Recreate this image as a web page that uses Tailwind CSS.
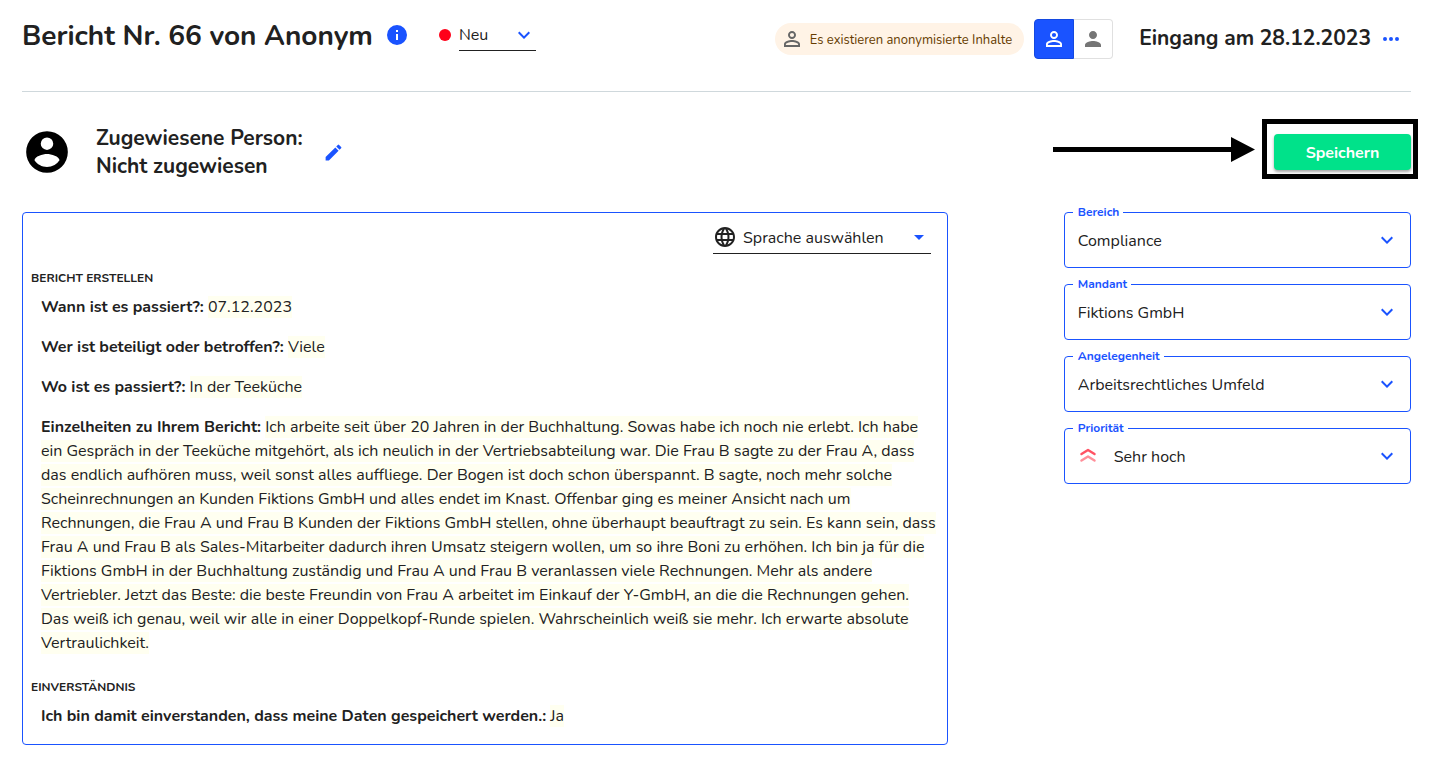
<!DOCTYPE html>
<html lang="de">
<head>
<meta charset="utf-8">
<meta name="viewport" content="width=device-width, initial-scale=1">
<title>Bericht Nr. 66</title>
<script src="https://cdn.jsdelivr.net/npm/@tailwindcss/browser@4"></script>
</head>
<body class="bg-white font-[Nunito,Lato,sans-serif] text-base text-[#212121]">
<svg class="hidden" aria-hidden="true">
  <symbol id="chevron" viewBox="0 0 24 24"><path fill="currentColor" d="M7.41 8.59 12 13.17l4.59-4.58L18 10l-6 6-6-6z"/></symbol>
  <symbol id="person-outline" viewBox="0 0 24 24"><path fill="currentColor" d="M12 5.9a2.1 2.1 0 1 1 0 4.2 2.1 2.1 0 0 1 0-4.2m0 9c2.97 0 6.1 1.46 6.1 2.1v1.1H5.900V17c0-.64 3.130-2.100 6.100-2.100M12 4C9.790 4 8 5.790 8 8s1.790 4 4 4 4-1.790 4-4-1.790-4-4-4m0 9c-2.670 0-8 1.340-8 4v3h16v-3c0-2.660-5.330-4-8-4"/></symbol>
  <symbol id="person" viewBox="0 0 24 24"><path fill="currentColor" d="M12 12c2.210 0 4-1.790 4-4s-1.790-4-4-4-4 1.790-4 4 1.790 4 4 4m0 2c-2.670 0-8 1.340-8 4v2h16v-2c0-2.660-5.330-4-8-4"/></symbol>
</svg>
<div class="pr-[19px] pl-[22px]">
  <header class="flex items-start justify-between border-b border-[#cfd8dc] pt-[15px] pb-8">
    <div class="flex h-10 items-center">
      <h1 class="pt-0.5 text-[28px] leading-10 font-bold whitespace-nowrap">Bericht Nr. 66 von Anonym</h1>
      <button type="button" aria-label="Information" class="ml-3 text-[#1a53ff]">
        <svg class="size-6" viewBox="0 0 24 24"><path fill="currentColor" d="M12 2a10 10 0 1 0 0 20 10 10 0 0 0 0-20m1 15h-2v-6h2zm0-8h-2V7h2z"/></svg>
      </button>
      <span class="ml-[30px] size-3 rounded-full bg-[#ff0019]"></span>
      <div class="relative ml-2 w-[77px]">
        <select aria-label="Status" class="h-8 w-full appearance-none border-b border-[#212121] bg-transparent pr-6 outline-none"><option>Neu</option></select>
        <svg class="pointer-events-none absolute top-1 right-0 size-6 text-[#1a53ff]"><use href="#chevron"/></svg>
      </div>
    </div>
    <div class="mt-1 flex h-10 items-center">
      <div class="flex h-8 items-center gap-1.5 rounded-full bg-[#fff3e6] pr-3 pl-[5px] text-[13px] whitespace-nowrap text-[#663c00]">
        <svg class="size-6 text-[#666]"><use href="#person-outline"/></svg><span class="pt-[3px]">Es existieren anonymisierte Inhalte</span>
      </div>
      <div class="ml-2.5 flex">
        <button type="button" aria-label="Anonymisiert" aria-pressed="true" class="flex h-10 w-10 items-center justify-center rounded-l border border-[#1449e0] bg-[#1a53ff] text-white"><svg class="size-6"><use href="#person-outline"/></svg></button>
        <button type="button" aria-label="Original" aria-pressed="false" class="flex h-10 w-[39px] items-center justify-center rounded-r border border-l-0 border-[#e0e0e0] text-[#757575]"><svg class="size-6"><use href="#person"/></svg></button>
      </div>
      <h2 class="ml-[26px] text-[21px] font-bold whitespace-nowrap">Eingang am 28.12.2023</h2>
      <button type="button" aria-label="Mehr" class="mr-2 ml-2 text-[#1a53ff]">
        <svg class="size-6" viewBox="0 0 24 24"><path fill="currentColor" d="M6 10a2 2 0 1 0 0 4 2 2 0 0 0 0-4m12 0a2 2 0 1 0 0 4 2 2 0 0 0 0-4m-6 0a2 2 0 1 0 0 4 2 2 0 0 0 0-4"/></svg>
      </button>
    </div>
  </header>

  <div class="mt-[27px] flex items-start justify-between">
    <div class="mt-[5px] flex h-14 items-center">
      <svg class="size-[50px] text-black" viewBox="0 0 24 24"><path fill="currentColor" d="M12 2a10 10 0 1 0 0 20 10 10 0 0 0 0-20m0 3a3 3 0 1 1 0 6 3 3 0 0 1 0-6m0 14.200c-2.500 0-4.710-1.280-6-3.220.03-1.990 4-3.080 6-3.080s5.970 1.090 6 3.080a7.200 7.200 0 0 1-6 3.220"/></svg>
      <h2 class="ml-6 text-[21px] leading-7 font-bold whitespace-nowrap">Zugewiesene Person:<br>Nicht zugewiesen</h2>
      <button type="button" aria-label="Bearbeiten" class="ml-5 text-[#1a53ff]">
        <svg class="size-[21px]" viewBox="0 0 24 24"><path fill="currentColor" d="M3 17.250V21h3.750L17.810 9.940l-3.750-3.750zM20.710 7.040a1 1 0 0 0 0-1.410l-2.340-2.340a1 1 0 0 0-1.410 0l-1.830 1.830 3.750 3.750z"/></svg>
      </button>
    </div>
    <div class="-mr-[7px] flex items-center gap-[7px]">
      <svg class="h-[25px] w-[202px] text-black" viewBox="0 0 202 25"><path fill="currentColor" d="M0 10h178V0l24 12.500L178 25V15H0z"/></svg>
      <div class="border-[5px] border-black pt-2.5 pr-0.5 pb-1 pl-[7px]">
        <button type="button" class="block h-9 w-[137px] rounded bg-[#00e28a] pt-0.5 font-bold text-white shadow-[0_2px_3px_rgba(0,0,0,0.350)]">Speichern</button>
      </div>
    </div>
  </div>

  <main class="mt-6 grid grid-cols-12 items-start">
    <section class="col-span-8 mt-2 rounded border border-[#1a53ff] px-2 pb-4">
      <div class="mt-2 mr-2 ml-auto flex h-[33px] w-[218px] items-center border-b border-[#212121]">
        <svg class="size-6 shrink-0" viewBox="0 0 24 24"><path fill="currentColor" d="M11.990 2C6.470 2 2 6.480 2 12s4.470 10 9.990 10C17.520 22 22 17.520 22 12S17.520 2 11.990 2m6.930 6h-2.950a15.700 15.700 0 0 0-1.380-3.560A8.030 8.030 0 0 1 18.920 8M12 4.040c.83 1.200 1.480 2.530 1.910 3.960h-3.820c.43-1.430 1.080-2.760 1.910-3.960M4.260 14a8.200 8.200 0 0 1 0-4h3.380a16.500 16.500 0 0 0 0 4zm.82 2h2.950c.32 1.250.78 2.450 1.380 3.560A8 8 0 0 1 5.080 16m2.950-8H5.080a8 8 0 0 1 4.330-3.560A15.700 15.700 0 0 0 8.030 8M12 19.960A14 14 0 0 1 10.090 16h3.820A14 14 0 0 1 12 19.960M14.340 14H9.660a14.700 14.700 0 0 1 0-4h4.680a14.600 14.600 0 0 1 0 4m.25 5.560c.6-1.110 1.060-2.310 1.380-3.560h2.950a8.030 8.030 0 0 1-4.330 3.560M16.360 14a16.500 16.500 0 0 0 0-4h3.380a8.200 8.200 0 0 1 0 4z"/></svg>
        <div class="relative ml-1.5 flex-1">
          <select aria-label="Sprache" class="h-8 w-full appearance-none bg-transparent pt-0.5 pr-6 outline-none"><option>Sprache auswählen</option></select>
          <svg class="pointer-events-none absolute top-1 right-0 size-6 text-[#1a53ff]" viewBox="0 0 24 24"><path fill="currentColor" d="m7 10 5 5 5-5z"/></svg>
        </div>
      </div>
      <h3 class="mt-4 text-xs leading-4 font-bold uppercase">Bericht erstellen</h3>
      <div class="mt-[9px] space-y-4 pl-2.5 leading-6">
        <p><strong>Wann ist es passiert?:</strong> <span class="bg-[#fffff0]">07.12.2023</span></p>
        <p><strong>Wer ist beteiligt oder betroffen?:</strong> <span class="bg-[#fffff0]">Viele</span></p>
        <p><strong>Wo ist es passiert?:</strong> <span class="bg-[#fffff0]">In der Teeküche</span></p>
        <p><strong>Einzelheiten zu Ihrem Bericht:</strong> <span class="bg-[#fffff0]">Ich arbeite seit über 20 Jahren in der Buchhaltung. Sowas habe ich noch nie erlebt. Ich habe ein Gespräch in der Teeküche mitgehört, als ich neulich in der Vertriebsabteilung war. Die Frau B sagte zu der Frau A, dass das endlich aufhören muss, weil sonst alles auffliege. Der Bogen ist doch schon überspannt. B sagte, noch mehr solche Scheinrechnungen an Kunden Fiktions GmbH und alles endet im Knast. Offenbar ging es meiner Ansicht nach um Rechnungen, die Frau A und Frau B Kunden der Fiktions GmbH stellen, ohne überhaupt beauftragt zu sein. Es kann sein, dass Frau A und Frau B als Sales-Mitarbeiter dadurch ihren Umsatz steigern wollen, um so ihre Boni zu erhöhen. Ich bin ja für die Fiktions GmbH in der Buchhaltung zuständig und Frau A und Frau B veranlassen viele Rechnungen. Mehr als andere Vertriebler. Jetzt das Beste: die beste Freundin von Frau A arbeitet im Einkauf der Y-GmbH, an die die Rechnungen gehen. Das weiß ich genau, weil wir alle in einer Doppelkopf-Runde spielen. Wahrscheinlich weiß sie mehr. Ich erwarte absolute Vertraulichkeit.</span></p>
      </div>
      <h3 class="mt-6 text-xs leading-4 font-bold uppercase">Einverständnis</h3>
      <p class="mt-[9px] pl-2.5 leading-6"><strong>Ich bin damit einverstanden, dass meine Daten gespeichert werden.:</strong> <span class="bg-[#fffff0]">Ja</span></p>
    </section>

    <aside class="col-span-3 col-start-10 space-y-2">
      <fieldset class="relative rounded border border-[#1a53ff]">
        <legend class="ml-2 pr-1 pl-[5px] text-xs leading-4 font-bold text-[#1a53ff]"><label for="bereich">Bereich</label></legend>
        <select id="bereich" class="mt-[3px] mb-2 block h-9 w-full appearance-none bg-transparent px-[13px] outline-none"><option>Compliance</option></select>
        <svg class="pointer-events-none absolute top-2 right-[11px] size-6 text-[#1a53ff]"><use href="#chevron"/></svg>
      </fieldset>
      <fieldset class="relative rounded border border-[#1a53ff]">
        <legend class="ml-2 pr-1 pl-[5px] text-xs leading-4 font-bold text-[#1a53ff]"><label for="mandant">Mandant</label></legend>
        <select id="mandant" class="mt-[3px] mb-2 block h-9 w-full appearance-none bg-transparent px-[13px] outline-none"><option>Fiktions GmbH</option></select>
        <svg class="pointer-events-none absolute top-2 right-[11px] size-6 text-[#1a53ff]"><use href="#chevron"/></svg>
      </fieldset>
      <fieldset class="relative rounded border border-[#1a53ff]">
        <legend class="ml-2 pr-1 pl-[5px] text-xs leading-4 font-bold text-[#1a53ff]"><label for="angelegenheit">Angelegenheit</label></legend>
        <select id="angelegenheit" class="mt-[3px] mb-2 block h-9 w-full appearance-none bg-transparent px-[13px] outline-none"><option>Arbeitsrechtliches Umfeld</option></select>
        <svg class="pointer-events-none absolute top-2 right-[11px] size-6 text-[#1a53ff]"><use href="#chevron"/></svg>
      </fieldset>
      <fieldset class="relative rounded border border-[#1a53ff]">
        <legend class="ml-2 pr-1 pl-[5px] text-xs leading-4 font-bold text-[#1a53ff]"><label for="prioritaet">Priorität</label></legend>
        <select id="prioritaet" class="mt-[3px] mb-2 block h-9 w-full appearance-none bg-transparent pr-[13px] pl-[49px] outline-none"><option>Sehr hoch</option></select>
        <svg class="pointer-events-none absolute top-3 left-[15px] size-4" viewBox="0 0 16 16" fill="none" stroke-width="2.400" stroke-linecap="round" stroke-linejoin="round"><path stroke="#ff5263" d="m1.500 6 6.500-4 6.500 4"/><path stroke="#ff8f9a" d="m1.500 12.500 6.500-4 6.500 4"/></svg>
        <svg class="pointer-events-none absolute top-2 right-[11px] size-6 text-[#1a53ff]"><use href="#chevron"/></svg>
      </fieldset>
    </aside>
  </main>
</div>
</body>
</html>
